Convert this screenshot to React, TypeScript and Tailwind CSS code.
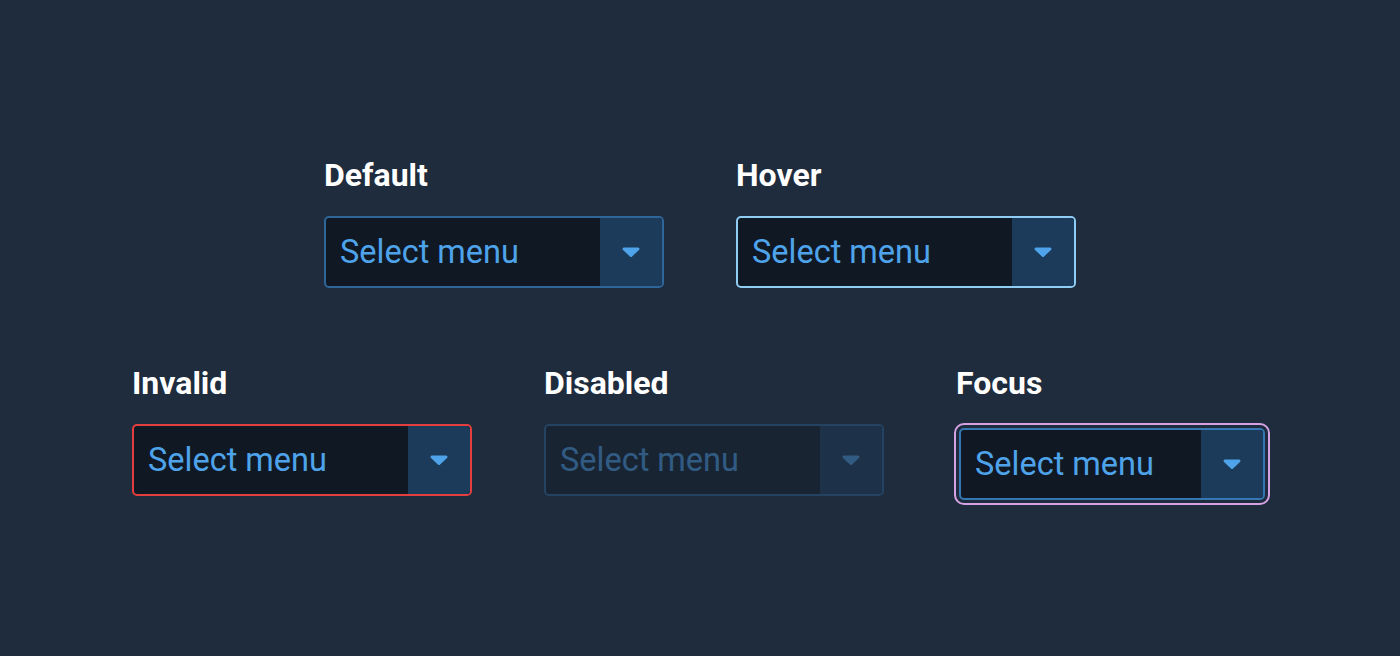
import React from "react";

type Variant = "default" | "hover" | "invalid" | "disabled" | "focus";

function Caret() {
  return (
    <svg width="18" height="10" viewBox="0 0 18 10" fill="#4ea3ea">
      <path d="M2 0.5h14a1.4 1.4 0 0 1 1 2.4l-6.9 6.5a1.6 1.6 0 0 1-2.2 0L1 2.9A1.4 1.4 0 0 1 2 .5z" />
    </svg>
  );
}

const borders: Record<Variant, string> = {
  default: "border-[#2e6699]",
  hover: "border-[#90cdf4]",
  invalid: "border-[#e53e3e]",
  disabled: "border-[#2e6699] opacity-40",
  focus: "border-[#3577b3] outline-2 outline-[#d5a3e3] outline-offset-[3px]",
};

function Select({ variant }: { variant: Variant }) {
  const width = variant === "focus" ? "w-[306px] mt-[4px] ml-[3px]" : "w-[340px]";
  return (
    <div
      className={`flex h-[72px] ${width} overflow-hidden rounded-[5px] border-2 bg-[#101923] ${borders[variant]}`}
    >
      <div className="flex flex-1 items-center pl-[14px] text-[32.5px] leading-none text-[#4ea3ea]">
        Select menu
      </div>
      <div className="flex w-[62px] items-center justify-center bg-[#1c3b5a]">
        <Caret />
      </div>
    </div>
  );
}

function Field({ label, variant }: { label: string; variant: Variant }) {
  return (
    <div className="flex flex-col">
      <div className="mb-[23px] text-[32px] font-bold leading-[36px] text-white">{label}</div>
      <Select variant={variant} />
    </div>
  );
}

export default function App() {
  return (
    <div
      className="min-h-[656px] w-full bg-[#1e2c3d] pt-[157px]"
      style={{ fontFamily: "Roboto, 'Liberation Sans', sans-serif" }}
    >
      <div className="flex justify-center gap-[72px]">
        <Field label="Default" variant="default" />
        <Field label="Hover" variant="hover" />
      </div>
      <div className="mt-[77px] flex gap-[72px] pl-[132px]">
        <Field label="Invalid" variant="invalid" />
        <Field label="Disabled" variant="disabled" />
        <Field label="Focus" variant="focus" />
      </div>
    </div>
  );
}
